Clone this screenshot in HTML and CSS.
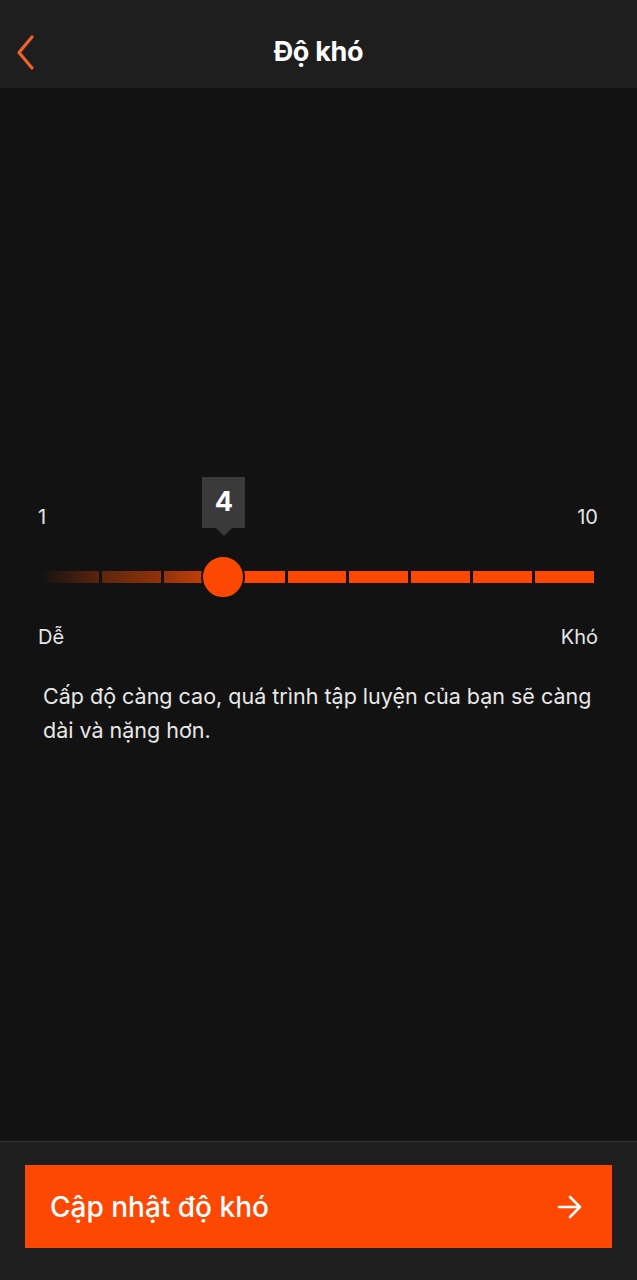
FILE: index.html
```html
<!DOCTYPE html>
<html lang="vi">
  <head>
    <meta charset="UTF-8" />
    <meta name="viewport" content="width=device-width, initial-scale=1" />
    <title>Độ khó</title>
    <link rel="stylesheet" href="styles.css">
  </head>
  <body>
    <header class="topbar">
      <a class="back" href="#" aria-label="Quay lại">
        <svg width="24" height="40" viewBox="0 0 24 40">
          <polyline points="15,4 2,19.5 15,35" fill="none" stroke="#f0622a" stroke-width="3.2" stroke-linecap="round" stroke-linejoin="round" />
        </svg>
      </a>
      <h1>Độ khó</h1>
    </header>

    <main class="content">
      <div class="slider">
        <div class="ends">
          <span>1</span>
          <span>10</span>
        </div>

        <div class="track-wrap">
          <div class="track">
            <span class="seg"></span>
            <span class="seg"></span>
            <span class="seg"></span>
            <span class="seg"></span>
            <span class="seg"></span>
            <span class="seg"></span>
            <span class="seg"></span>
            <span class="seg"></span>
            <span class="seg"></span>
          </div>
          <!-- value 4 of 1..10 -->
          <div class="handle" style="left: 33.1%">
            <div class="bubble">4</div>
            <div class="thumb"></div>
          </div>
        </div>

        <div class="labels">
          <span>Dễ</span>
          <span>Khó</span>
        </div>
      </div>

      <p class="hint">Cấp độ càng cao, quá trình tập luyện của bạn sẽ càng dài và nặng hơn.</p>
    </main>

    <footer class="bottom">
      <button class="update" type="button">
        <span>Cập nhật độ khó</span>
        <svg width="26" height="26" viewBox="0 0 26 26">
          <path d="M2 13h21M13 3l10 10-10 10" fill="none" stroke="#fff" stroke-width="2.6" stroke-linecap="round" stroke-linejoin="round" />
        </svg>
      </button>
    </footer>
  </body>
</html>
```

FILE: styles.css
```css
/* Global */
body {
  margin: 0;
  height: 1280px;
  background-color: #121212;
  color: #ececec;
  font-family: Inter, "Noto Sans", sans-serif;
  display: flex;
  flex-direction: column;
}

/* Header */
.topbar {
  position: relative;
  height: 88px;
  background-color: #1e1e1e;
  display: flex;
  align-items: center;
  justify-content: center;
}

.back {
  position: absolute;
  left: 17px;
  top: 33px;
  display: block;
  line-height: 0;
}

.topbar h1 {
  margin: 0;
  color: #fff;
  font-size: 27px;
  font-weight: 700;
  letter-spacing: -0.3px;
  padding-top: 14px;
}

/* Content */
.content {
  flex: 1;
  padding-top: 389px;
}

.slider {
  padding: 28px 39px 0 38px;
}

.ends,
.labels {
  display: flex;
  justify-content: space-between;
  font-size: 20px;
  line-height: 24px;
  color: #e6e6e6;
}

.track-wrap {
  position: relative;
  height: 42px;
  margin: 27px 4px 0 2px;
  display: flex;
  align-items: center;
}

.track {
  flex: 1;
  height: 12px;
  display: flex;
  background: linear-gradient(
    to right,
    rgba(252, 76, 2, 0) 0%,
    rgba(252, 76, 2, 0.35) 12%,
    rgba(252, 76, 2, 0.55) 22%,
    rgba(252, 76, 2, 0.85) 33%,
    #fc4802 33%,
    #fc4802 100%
  );
}

.seg {
  flex: 1;
}

.seg + .seg {
  border-left: 3px solid #121212;
}

/* Handle: thumb + value bubble */
.handle {
  position: absolute;
  top: 0;
  width: 0;
  height: 42px;
}

.thumb {
  position: absolute;
  left: -22px;
  top: -1px;
  width: 40px;
  height: 40px;
  border-radius: 50%;
  background-color: #fc4802;
  border: 2px solid #121212;
}

.bubble {
  position: absolute;
  left: -21px;
  top: -79px;
  width: 43px;
  height: 51px;
  background-color: #3a3a3a;
  color: #fff;
  font-size: 27px;
  font-weight: 700;
  line-height: 50px;
  text-align: center;
}

.bubble::after {
  content: "";
  position: absolute;
  left: 50%;
  bottom: -8px;
  margin-left: -8px;
  border-left: 8px solid transparent;
  border-right: 8px solid transparent;
  border-top: 8px solid #3a3a3a;
}

.labels {
  margin-top: 27px;
}

.hint {
  margin: 30px 40px 0 43px;
  font-size: 21.5px;
  line-height: 34px;
  color: #e8e8e8;
}

/* Bottom bar */
.bottom {
  height: 139px;
  background-color: #1e1e1e;
  border-top: 1px solid #333;
  padding: 23px 25px 0 25px;
  box-sizing: border-box;
}

.update {
  width: 100%;
  height: 83px;
  border: none;
  border-radius: 0;
  background-color: #fc4802;
  color: #fff;
  font-family: Inter, "Noto Sans", sans-serif;
  font-size: 28px;
  font-weight: 500;
  display: flex;
  align-items: center;
  justify-content: space-between;
  padding: 0 29px 0 25px;
  cursor: pointer;
}
```
